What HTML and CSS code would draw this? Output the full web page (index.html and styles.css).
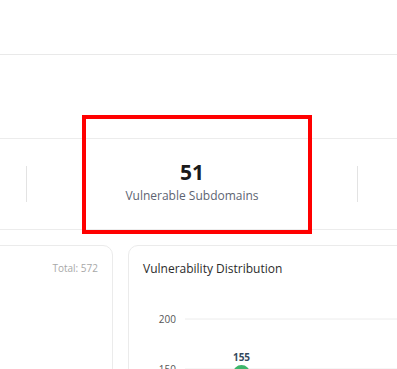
FILE: index.html
```html
<!DOCTYPE html>
<html>
<head>
<meta charset="utf-8">
<link rel="stylesheet" href="styles.css">
</head>
<body>
<div class="page">
  <header class="topbar"></header>
  <div class="spacer"></div>
  <section class="stats">
    <div class="stat stat-edge"></div>
    <div class="divider"></div>
    <div class="stat">
      <div class="stat-value">51</div>
      <div class="stat-label">Vulnerable Subdomains</div>
    </div>
    <div class="divider"></div>
    <div class="stat"></div>
  </section>
  <section class="cards">
    <div class="card card-left">
      <div class="card-head">
        <span class="card-title"></span>
        <span class="card-total">Total: 572</span>
      </div>
    </div>
    <div class="card card-right">
      <div class="card-head">
        <span class="card-title">Vulnerability Distribution</span>
        <span class="card-total">Total: 572</span>
      </div>
      <svg class="chart" width="300" height="120" viewBox="0 0 300 120">
        <text class="axis" x="33" y="45.5" text-anchor="end">200</text>
        <line x1="42" y1="42" x2="300" y2="42" stroke="#ececec" stroke-width="1"/>
        <text class="axis" x="33" y="95.5" text-anchor="end">150</text>
        <line x1="42" y1="92" x2="300" y2="92" stroke="#ececec" stroke-width="1"/>
        <text class="bar-label" x="98.5" y="84" text-anchor="middle">155</text>
        <rect x="90" y="88" width="17" height="40" rx="8.5" fill="#3cb56a"/>
      </svg>
    </div>
  </section>
  <div class="highlight"></div>
</div>
</body>
</html>
```
FILE: styles.css
```css
html, body {
  margin: 0;
  padding: 0;
  background: #ffffff;
  overflow: hidden;
}
body {
  font-family: "Open Sans", "Noto Sans", sans-serif;
  color: #222;
}
.page {
  position: relative;
  width: 397px;
  height: 369px;
  overflow: hidden;
}
.topbar {
  height: 54px;
  border-bottom: 1px solid #e9e9e9;
}
.spacer {
  height: 83px;
}
.stats {
  display: grid;
  grid-template-columns: 26px 1px 330px 1px 1fr;
  align-items: center;
  height: 90px;
  border-top: 1px solid #ececec;
  border-bottom: 1px solid #ececec;
}
.divider {
  height: 36px;
  background: #e3e3e3;
}
.stat {
  display: flex;
  flex-direction: column;
  align-items: center;
  padding-bottom: 4px;
}
.stat-value {
  font-size: 21px;
  font-weight: 700;
  line-height: 24px;
  color: #1a1a1a;
}
.stat-label {
  margin-top: 4px;
  font-size: 12px;
  line-height: 16px;
  color: #5d6472;
}
.cards {
  display: flex;
  gap: 15px;
  margin-top: 15px;
  margin-left: -40px;
}
.card {
  box-sizing: border-box;
  border: 1px solid #ebebeb;
  border-radius: 10px;
  padding: 14px 14px 0 14px;
  height: 140px;
  flex: none;
}
.card-left {
  width: 153px;
}
.card-right {
  width: 330px;
}
.card-head {
  display: flex;
  justify-content: space-between;
  align-items: center;
  height: 16px;
}
.card-title {
  font-size: 12px;
  color: #2b2b2b;
}
.card-total {
  font-size: 10px;
  color: #a8a8a8;
}
.chart {
  display: block;
  margin-top: 1px;
}
.axis {
  font-family: "Open Sans", "Noto Sans", sans-serif;
  font-size: 10px;
  fill: #555;
}
.bar-label {
  font-family: "Open Sans", "Noto Sans", sans-serif;
  font-size: 10px;
  font-weight: 700;
  fill: #34495e;
}
.highlight {
  position: absolute;
  left: 82px;
  top: 115px;
  width: 222px;
  height: 111px;
  border: 4px solid #ff0000;
}
```
